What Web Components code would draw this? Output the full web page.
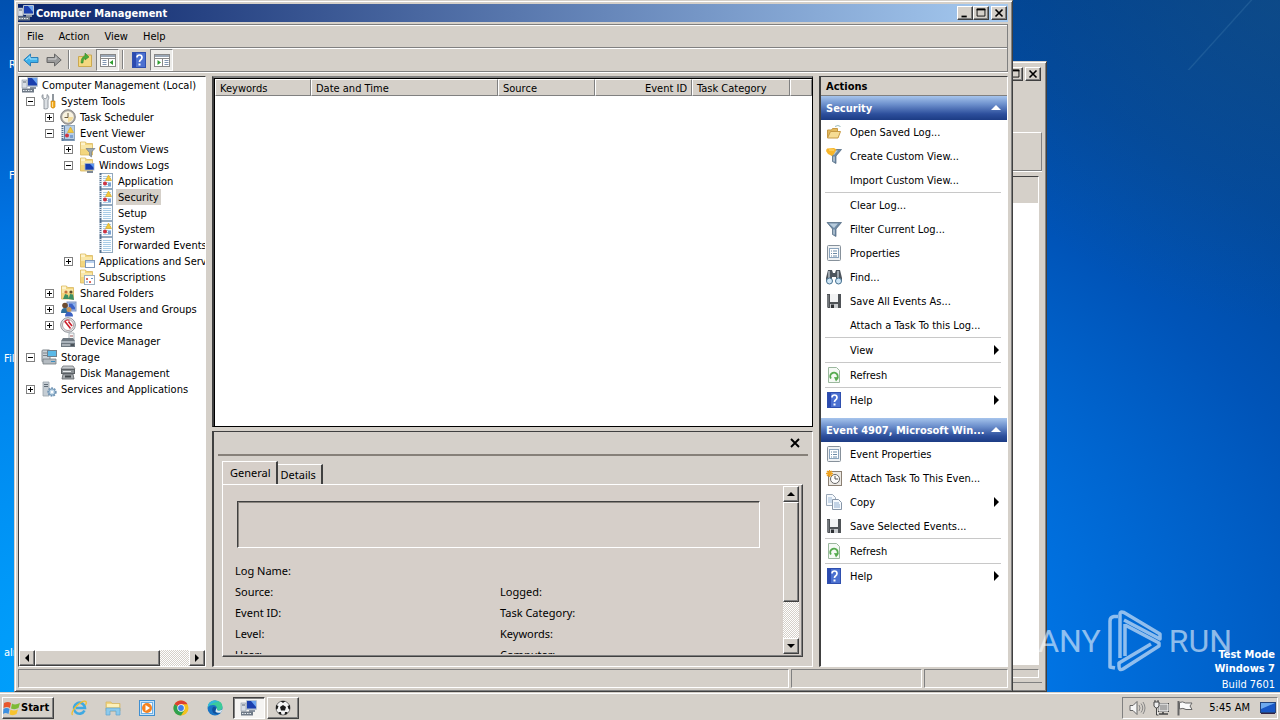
<!DOCTYPE html>
<html lang="en">
<head>
<meta charset="utf-8">
<title>Computer Management</title>
<style>
html,body{margin:0;height:100%;overflow:hidden}
body{
  --face:#d5d0c9;--shade:#808080;--dark:#404040;--lite:#ffffff;
  font:11px/16px "DejaVu Sans Condensed","Noto Sans",sans-serif;color:#000;
}
</style>
</head>
<body>
<desktop-screen></desktop-screen>
<script>
const BASE = `
*{box-sizing:border-box}
:host{display:block;box-sizing:border-box}
button{font:inherit;color:inherit;background:none;border:0;margin:0;padding:0;text-align:left}
.raised{background:var(--face);border:1px solid;border-color:var(--lite) var(--dark) var(--dark) var(--lite);box-shadow:inset -1px -1px var(--shade)}
.center{display:flex;align-items:center;justify-content:center}
`;
function element(name, css, html) {
  customElements.define(name, class extends HTMLElement {
    connectedCallback() {
      if (this.shadowRoot) return;
      const root = this.attachShadow({mode: 'open'});
      root.innerHTML = `<style>${BASE}${css}</style>` + (typeof html === 'function' ? html(this) : html);
    }
  });
}

/* ---------- icons ---------- */
const FOLDER = '<path d="M1.500 1h5l1 1.500h6V14h-12z" fill="#f3d67e" stroke="#d9b860" stroke-width=".8"/><path d="M2 4h11v4H2z" fill="#f9e7a8"/><path d="M2 1.500h4V4H2z" fill="#fdf3cc"/>';
const LOG = '<rect x="2.500" y=".5" width="12" height="15" fill="#fbfdff" stroke="#93a9be"/><path d="M1.500 0h2v16h-2z" fill="#54708f"/><path d="M1 2.500h3M1 4.500h3M1 6.500h3M1 8.500h3M1 10.500h3M1 12.500h3" stroke="#dde6ef"/>';
const LINES = '<path d="M5 3.500h8M5 5.500h8M5 7.500h8M5 9.500h8M5 11.500h8M5 13.500h8" stroke="#a9cce6"/>';
const MARKS = '<path d="M10.500 2l3 5.500h-6z" fill="#f3ca3a" stroke="#d9a520" stroke-width=".6"/><circle cx="7" cy="10.500" r="2" fill="#cf3442"/><rect x="10" y="10" width="3" height="3" fill="#7da0d0"/>';
const FUNNEL = '<path d="M1 1.500h14.500L10 8v7.500l-3.500-2V8z" fill="#6f8ba6" stroke="#4b637b" stroke-width=".7"/><path d="M3 2.500h9L8 7z" fill="#b9cddd"/><path d="M8 8.500v5" stroke="#dbe6ee"/>';
const PAGE = '<rect x="1.500" y=".5" width="13" height="15" rx="1" fill="#eef1f3" stroke="#87919b"/>';
const ICONS = {
  computer: '<rect x="5" y="0" width="11" height="10" rx="1" fill="#b9c4d2"/><rect x="6" y="1" width="9" height="7.500" fill="#1b3fae"/><path d="M10 1h5v6z" fill="#6da4f0"/><path d="M8 10h6v2H8z" fill="#8c96a3"/><rect x="0" y="3" width="5" height="8" fill="#d9dee5" stroke="#8993a1" stroke-width=".6"/><path d="M1 5h3" stroke="#5b6573"/><path d="M0 11.500h12v4H0z" fill="#6e7986"/><path d="M1 13.500h10" stroke="#e6ebf0" stroke-dasharray="1.500 1"/>',
  tools: '<path d="M2 1.500v3l2 1.500 2-1.500v-3c2 1 2.500 3.500 1 5.500v7.500q0 1.500-2.500 1.500T3 14.500V7C.5 5 .5 2.500 2 1.500z" fill="#dce0e4" stroke="#7d858e" stroke-width=".8"/><path d="M11 1h2v7h-2z" fill="#90979e"/><path d="M10 8h4v6q-2 2.500-4 0z" fill="#f5ad1f" stroke="#c47c0a" stroke-width=".6"/><path d="M11 9h1v5h-1z" fill="#ffe09a"/>',
  clock: '<circle cx="8" cy="8" r="7.300" fill="#a9a7a4" stroke="#8a8886"/><circle cx="8" cy="8" r="5.800" fill="#f8f2df"/><path d="M8 8H13A5 5 0 0 1 8 13z" fill="#f3dc9b"/><path d="M8 4v4.500H4.500" fill="none" stroke="#6b5c43"/>',
  viewer: LOG + '<rect x="4" y="1" width="10" height="14" fill="#b7cee6"/><path d="M4 1h1v14H4zM2 14h12v1.500H2z" fill="#6383a8"/>' + MARKS,
  logmark: LOG + LINES + MARKS,
  log: LOG + LINES,
  folderfilter: FOLDER + '<path d="M7 7.500h9l-3.500 3.500V16l-2-1.500v-3z" fill="#9aa6b1" stroke="#65707b" stroke-width=".6"/>',
  folderpc: FOLDER + '<rect x="6" y="6.500" width="9" height="6.500" fill="#173db0" stroke="#a7b5cb" stroke-width=".8"/><path d="M11 7h4v4z" fill="#5f98ee"/><path d="M8 14h6v2H8z" fill="#7c8896"/>',
  folderwin: FOLDER + '<rect x="6.500" y="7.500" width="9" height="7" fill="#fff" stroke="#7f97b8"/><path d="M7 8h8v2H7z" fill="#b9d1ee"/>',
  foldersub: FOLDER + '<rect x="5.500" y="6.500" width="10" height="9" fill="#fff" stroke="#9fb0c0"/><path d="M7 9h2v2H7zM10 12h2v2h-2z" fill="#dd6a60"/><path d="M7 13h2M12 9.500h2" stroke="#6c94c5"/>',
  foldershare: FOLDER + '<circle cx="6" cy="7" r="1.600" fill="#c4703b"/><circle cx="11" cy="7" r="1.600" fill="#5b4a28"/><path d="M3 14l2-5 3 1 1 4zM8.500 14L10 9l3 .5L14 15z" fill="#3b8f65"/>',
  users: '<rect x="7" y="1" width="9" height="9" fill="#a9bfe6" stroke="#7c94c4"/><rect x="9" y="2.500" width="6" height="6" fill="#3c62c6"/><path d="M12 2.500h3v4z" fill="#89b0f0"/><circle cx="5" cy="4.500" r="2.800" fill="#6d4b2f"/><path d="M1 12q0-5 4-5t4 5z" fill="#2f6f9c"/><circle cx="9" cy="8.500" r="2.500" fill="#c9975a"/><path d="M5 15.500q0-4.500 4-4.500t4 4.500z" fill="#3b62c2"/>',
  perf: '<circle cx="8" cy="8" r="7.300" fill="#e8e9eb" stroke="#8d9197"/><circle cx="8" cy="8" r="5.500" fill="#fff" stroke="#9b8c8e" stroke-width=".8"/><path d="M4.500 5q2-3 5-1.500" fill="none" stroke="#d34" stroke-width="1.200"/><path d="M5 4.500l5.500 7M8.500 4.500L12 9" stroke="#c9202c" stroke-width="1.600"/>',
  device: '<path d="M9 0h5v8H9z" fill="#f7f8f9" stroke="#9aa2aa" stroke-width=".8"/><path d="M10 2h3v2h-3z" fill="#caa"/><path d="M1 8l2-3h10l2 3v6H1z" fill="#6e7881"/><path d="M1 8h14v2H1z" fill="#aab3bb"/><path d="M2 12h8" stroke="#e2e7eb"/><path d="M11 11h3v2h-3z" fill="#4a5259"/>',
  storage: '<rect x="1" y="1" width="8" height="12" rx="1" fill="#cbd1d6" stroke="#80888f"/><path d="M2 4h6M2 6.500h6" stroke="#7b838b"/><rect x="6.500" y="1.500" width="9" height="6" fill="#5ab9e8" stroke="#71808c"/><path d="M2 10h13v5H2z" fill="#b4bbc1" stroke="#737b82" stroke-width=".8"/><path d="M10 12.500h4" stroke="#3b8ec0"/>',
  disk: '<path d="M3 1h10l2 3H1z" fill="#c7cbce" stroke="#6d7276" stroke-width=".8"/><rect x="1.500" y="4.500" width="13" height="4" fill="#8b9195" stroke="#5c6165"/><path d="M3 6.500h8" stroke="#e8ebed"/><path d="M3 9h10l1 5H2z" fill="#a4a9ad" stroke="#5c6165" stroke-width=".8"/><path d="M5 11.500h6" stroke="#3f4448" stroke-width="2"/>',
  services: '<path d="M2 1h6v14H2z" fill="#c5cdd4" stroke="#9aa3ab" stroke-width=".8"/><path d="M3 3.500h4M3 5.500h4" stroke="#5f6a74"/><circle cx="11" cy="11" r="3.700" fill="#a9c6de" stroke="#6f93b3" stroke-width="2" stroke-dasharray="1.700 1"/><circle cx="11" cy="11" r="3" fill="#c3d9ea" stroke="#6f93b3" stroke-width=".7"/><circle cx="11" cy="11" r="1.200" fill="#fff"/>',
  open: '<path d="M1.500 14V6h4l1-1.500h5V8" fill="#e2b95c" stroke="#c79a44"/><path d="M9 2.500q3-2 5.500 0" fill="none" stroke="#9bb"/><path d="M1.500 14l3-6.500h10l-2.500 6.500z" fill="#f6dc94" stroke="#c79a44"/>',
  funnel: FUNNEL,
  funnelnew: FUNNEL + '<path d="M0 3L1 .5 8 0l2.500 1.500L8 6 6 8 2 6z" fill="#f8b62a"/><path d="M3 2h5" stroke="#ffdf80"/>',
  props: PAGE + '<rect x="3.500" y="3.500" width="9" height="9" fill="#fff" stroke="#8ba4bd"/><path d="M5 6h1M7 6h4M5 8.500h1M7 8.500h4M5 11h1M7 11h4" stroke="#6d8ba6"/>',
  find: '<path d="M2 1h4l1 3h2l1-3h4l2 8v3h-6V8H6v4H0V9z" fill="#4e565e"/><path d="M3 2v7M12 2v7" stroke="#b7c0c8" stroke-width="1.500"/><circle cx="3.500" cy="12" r="3" fill="#cfe6f6" stroke="#46708f"/><circle cx="12.500" cy="12" r="3" fill="#cfe6f6" stroke="#46708f"/>',
  save: '<path d="M1 1h14v14H2l-1-1z" fill="#4f5357"/><path d="M4 1h8v8H4z" fill="#f2f3f4"/><path d="M4 11h8v4H4z" fill="#c9cccf"/><path d="M5 11.500h3V15H5z" fill="#2e3134"/><path d="M2 2v12" stroke="#9a9ea2"/>',
  refresh: '<path d="M2.500.5h8l3 3v12h-11z" fill="#f5faf5" stroke="#9cb89f"/><path d="M5 11.500A3.700 3.700 0 1 1 10.500 12" fill="none" stroke="#56ab50" stroke-width="1.900"/><path d="M8 10l5 .5-3 4z" fill="#56ab50"/>',
  help: '<rect x="1.500" y=".5" width="13" height="15" fill="#4b70d0" stroke="#2f4fae"/><path d="M2 1h3v14H2z" fill="#2b4ab0"/><path d="M6 5.500Q6 3 8.500 3T11 5.500Q11 7 9.500 8 8.500 8.700 8.500 10" fill="none" stroke="#fff" stroke-width="1.700"/><rect x="7.500" y="11.500" width="2" height="2" fill="#fff"/>',
  task: '<rect x="2.500" y="1.500" width="13" height="14" fill="#ece9e4" stroke="#8b8073"/><circle cx="9" cy="9" r="4.500" fill="#fdfdfd" stroke="#666"/><path d="M9 6v3h3" fill="none" stroke="#555"/><path d="M3.500 0v7M0 3.500h7M1 1l5 5M6 1L1 6" stroke="#f0a21c" stroke-width="1.300"/>',
  copy: '<path d="M.5.5h6l3 3v8h-9z" fill="#f5f9fd" stroke="#9aa8b8"/><path d="M2 4h4M2 6h4M2 8h4" stroke="#9fbbd8"/><path d="M6.500 5.500h6l3 3v7h-9z" fill="#f5f9fd" stroke="#8796a8"/><path d="M8 9h5M8 11h6M8 13h6" stroke="#8fadcf"/>',
  back: '<path d="M.8 8L7.500 2v3.500H15v5H7.500V14z" fill="#3fb1ea" stroke="#2b7fb8"/><path d="M3 8l4-3.500V7h7" fill="none" stroke="#a9e2fb"/>',
  forward: '<path d="M15.200 8L8.500 2v3.500H1v5h7.500V14z" fill="#9a9a9a" stroke="#666"/><path d="M2 7h8V4.500" fill="none" stroke="#d0d0d0"/>',
  up: '<path d="M1.500 4.500h5l1-1.500h7v11.500h-13z" fill="#f4d880" stroke="#cba850"/><path d="M4 11q0-6 4-7V1l4 4-4 3V6q-2 1-2 5z" fill="#47ab3a" stroke="#2a7c25" stroke-width=".5"/>',
  paneleft: '<rect x=".5" y="2.500" width="15" height="12" fill="#fff" stroke="#888"/><path d="M1 3h14v2H1z" fill="#9aa7b6"/><path d="M1 6.500h14M8.500 7v7" stroke="#888"/><path d="M2.500 8.500h4M2.500 10.500h4M2.500 12.500h4" stroke="#8095b0"/><path d="M13 8v5L9.500 10.500z" fill="#2f9d2f"/>',
  paneright: '<rect x=".5" y="2.500" width="15" height="12" fill="#fff" stroke="#888"/><path d="M1 3h14v2H1z" fill="#9aa7b6"/><path d="M1 6.500h14M8.500 7v7" stroke="#888"/><path d="M10.500 8.500h4M10.500 10.500h4M10.500 12.500h4" stroke="#8095b0"/><path d="M3.500 8v5L7 10.500z" fill="#2f9d2f"/>',
  left: '<path d="M10 4v8L6 8z"/>', right: '<path d="M6 4v8l4-4z"/>', submenu: '<path d="M5 3v10l5-5z"/>',
  upa: '<path d="M4 10h8L8 6z"/>', downa: '<path d="M4 6h8l-4 4z"/>', collapse: '<path d="M3 10h10L8 5z" fill="#fff"/>',
  min: '<path d="M4 11h6v2H4z"/>', max: '<path d="M3.500 3.500h9v8h-9z" fill="none" stroke="#000"/><path d="M3 3h10v2H3z"/>',
  close: '<path d="M4 4l8 8M12 4l-8 8" stroke="#000" stroke-width="1.900"/>',
  flag: '<path d="M0 3q4-2 7 0L6 8Q3 6-.5 8z" fill="#e8572c"/><path d="M8 3.500q3 2 8-.500l-1.500 5Q11 10 7 8.500z" fill="#7dbb35"/><path d="M-.5 9q3-2 6 0l-1 5q-3-2-5.500 0z" fill="#3d8fe0"/><path d="M6.500 9.500q3 2 7.500 0l-1.500 4.500q-3 2-7 .5z" fill="#f7c32f"/>',
  ie: '<path d="M13.500 10.500A5.500 5.500 0 1 1 14 8H5" fill="none" stroke="#3fa9e2" stroke-width="2.600"/><path d="M1.500 15Q-.5 13 5 6.500 12 0 15 1.500 16 3 14.500 5" fill="none" stroke="#f2be2c" stroke-width="1.300"/>',
  explorer: '<path d="M1 2h5l1 1.500h8V11H1z" fill="#f0d480" stroke="#d5b55c" stroke-width=".7"/><path d="M2 4h12v3H2z" fill="#fdf0b8"/><path d="M1 8h14v7h-4v-4H5v4H1z" fill="#8ccaec" stroke="#5fa4d0" stroke-width=".7"/>',
  wmp: '<rect x=".5" y=".5" width="15" height="15" fill="#c9e3f8" stroke="#3f8fd1"/><rect x="2.500" y="2.500" width="11" height="11" fill="#f9fcff" stroke="#6fb0e4"/><circle cx="8" cy="8" r="5" fill="#f58220"/><path d="M6.500 5v6l4.500-3z" fill="#fff"/>',
  chrome: '<circle cx="8" cy="8" r="7.500" fill="#f4c21f"/><path d="M8 8L1.500 4.200A7.500 7.500 0 0 1 14.500 4.200H8z" fill="#dd4031"/><path d="M8 8L1.500 4.200A7.500 7.500 0 0 0 8 15.500l3.500-5.500z" fill="#2fa14f"/><circle cx="8" cy="8" r="3.700" fill="#fff"/><circle cx="8" cy="8" r="2.900" fill="#3f7de8"/>',
  edge: '<circle cx="8" cy="8" r="7.500" fill="#1a73c4"/><path d="M.6 7Q1.500.5 8 .5q7.500 0 7.500 6.500 0 3-3.500 3.500-2 0-2-1.500 0-4-4-4Q2 5 .6 7z" fill="#3ccb9a"/><path d="M1 5Q3 .5 8 .5l4 1.500Q5 2 1 7z" fill="#32b7dc"/><path d="M9.500 9q-1-3-3.500-2-2 3 .5 6 3 2 7 0-2 1.500-5-1-1.500-2 1-3z" fill="#124f9a"/><path d="M9.500 8q1 1 .5 2 2 1.500 5.500-.5l-1.500 3q-4 1-5.500-1z" fill="#dfe9ee"/>',
  ball: '<circle cx="8" cy="8" r="7" fill="#f4f4f4" stroke="#555" stroke-width=".8"/><path d="M8 5l3 2-1 3.500H6L5 7zM5.500 1h5L8 3zM1 5l2.500 1-1 3-1.500.5zM15 5l-2.500 1 1 3 1.500.5zM3.500 12l2.500 0 .5 3L4 14zM12.500 12L10 12l-.5 3L12 14z" fill="#1c1c1c"/>',
  sound: '<path d="M1 5.500h3l4-4v13l-4-4H1z" fill="#f6f6f6" stroke="#666"/><path d="M10 5q2 3 0 6M12 3.500q3.500 4.500 0 9M14 2q4 6 0 12" fill="none" stroke="#888"/>',
  net: '<rect x="5.500" y="3.500" width="10" height="8" fill="#aaa" stroke="#444"/><path d="M6 4h9v7H6z" fill="none" stroke="#fff"/><path d="M6 14h9M10 12v2" stroke="#444" stroke-width="1.600"/><path d="M1 2h5v4q-1 2-2.500 2T1 6zM2 0v2M5 0v2M3.500 8v7h2" fill="#eee" stroke="#444"/>',
  notice: '<path d="M1.500 1v14.500" stroke="#666" stroke-width="2"/><path d="M2.500 2.500q3-1.500 6 .5h6.500l-2 3 2 3.500H9q-3-2-6.500-.5z" fill="#fafafa" stroke="#666"/>',
  desk: '<rect x=".5" y="2.500" width="15" height="10" fill="#1857c4" stroke="#24457c"/><path d="M1 3h14L1 9z" fill="#6da9ee"/><path d="M1 13.500h14" stroke="#324"/>'
};
element('ui-icon', `:host{display:block;width:16px;height:16px;flex:none}svg{display:block;width:100%;height:100%;overflow:visible}`,
  el => `<svg viewBox="0 0 16 16" aria-hidden="true">${ICONS[el.getAttribute('name')] || ''}</svg>`);

/* ---------- scroll bar ---------- */
element('scroll-bar', `
:host{display:flex;flex:none;background:repeating-conic-gradient(#fff 0 25%,var(--face) 0 50%) 0 0/2px 2px}
:host([vertical]){flex-direction:column;width:16px}
:host(:not([vertical])){height:16px}
button{width:16px;height:16px;flex:none}
.rest{flex:1}
.thumb{flex:none}
`, el => { const v = el.hasAttribute('vertical'), s = el.getAttribute('size'); return `
<button class="raised center" aria-label="Scroll back"><ui-icon name="${v ? 'upa' : 'left'}"></ui-icon></button>
<div class="raised thumb" style="${v ? 'height' : 'width'}:${s}"></div><div class="rest"></div>
<button class="raised center" aria-label="Scroll forward"><ui-icon name="${v ? 'downa' : 'right'}"></ui-icon></button>`; });

/* ---------- window frame ---------- */
element('window-controls', `
:host{display:flex;flex:none}
button{width:16px;height:14px}
button:last-child{margin-left:2px}
ui-icon{width:14px;height:14px}
`, `<button class="raised center" aria-label="Minimize"><ui-icon name="min"></ui-icon></button><button class="raised center" aria-label="Maximize"><ui-icon name="max"></ui-icon></button><button class="raised center" aria-label="Close"><ui-icon name="close"></ui-icon></button>`);

element('app-window', `
:host{display:flex;flex-direction:column;background:var(--face);border:1px solid;border-color:var(--face) var(--dark) var(--dark) var(--face);box-shadow:inset 1px 1px #fff,inset -1px -1px var(--shade);padding:3px 4px 3px 3px}
header{display:flex;align-items:center;height:18px;flex:none;gap:2px;padding:0 1px 0 0;color:#fff;font-weight:bold;background:linear-gradient(90deg,#0a246a,#a6caf0);margin-bottom:2px}
:host([inactive]) header{background:var(--face)}
h1{font-size:11px;line-height:16px;margin:0;padding-top:2px;flex:1;font-weight:bold}
`, el => `<header>${el.hasAttribute('icon') ? `<ui-icon name="${el.getAttribute('icon')}"></ui-icon>` : ''}<h1>${el.getAttribute('heading') || ''}</h1><window-controls></window-controls></header><slot></slot>`);

element('menu-bar', `
:host{display:flex;align-items:center;height:24px;flex:none;border:1px solid var(--shade);box-shadow:inset 1px 1px #fff,0 1px #fff}
button{padding:2px 7px 0 8px}
button:first-child{padding-left:7px}
`, `<button>File</button><button>Action</button><button>View</button><button>Help</button>`);

element('tool-bar', `
:host{display:flex;align-items:center;height:24px;flex:none;border:1px solid var(--shade);border-top:0;box-shadow:inset 1px 1px #fff,0 1px #fff}
button{width:23px;height:22px}
button[aria-pressed]{background:#ecebe8;border:1px solid;border-color:var(--shade) #fff #fff var(--shade)}
i{width:2px;height:19px;margin:0 3px;border-left:1px solid var(--shade);border-right:1px solid #fff}
`, `<button class="center" aria-label="Back"><ui-icon name="back"></ui-icon></button><button class="center" aria-label="Forward"><ui-icon name="forward"></ui-icon></button><i></i>
<button class="center" aria-label="Up one level"><ui-icon name="up"></ui-icon></button><button class="center" aria-pressed="true" aria-label="Console tree"><ui-icon name="paneleft"></ui-icon></button><i></i>
<button class="center" aria-label="Help"><ui-icon name="help"></ui-icon></button><button class="center" aria-pressed="true" aria-label="Action pane"><ui-icon name="paneright"></ui-icon></button>`);

/* ---------- console tree ---------- */
element('tree-item', `
:host{display:block}
.row{display:flex;align-items:center;height:16px;padding-left:7px;white-space:nowrap}
.box{width:9px;height:9px;flex:none;margin-right:6px;padding:0;border:1px solid transparent}
.box.on{border-color:#808080;background:linear-gradient(#000,#000) 1px 3px/5px 1px no-repeat}
.box.plus{background:linear-gradient(#000,#000) 1px 3px/5px 1px no-repeat,linear-gradient(#000,#000) 3px 1px/1px 5px no-repeat}
.name{padding:2px 2px 0;line-height:14px;margin-left:2px}
:host([selected]) .name{background:var(--face)}
.kids{padding-left:19px}
:host([root]) .row{padding-left:3px}
:host([root]) .box{display:none}
:host([root]) .kids{padding-left:0}
`, el => { const s = el.getAttribute('state'); return `<div class="row" role="treeitem">
${s ? `<button class="box on ${s === 'closed' ? 'plus' : ''}" aria-label="${s === 'closed' ? 'Expand' : 'Collapse'}"></button>` : '<span class="box"></span>'}
<ui-icon name="${el.getAttribute('icon')}"></ui-icon><span class="name">${el.getAttribute('label')}</span></div><div class="kids"><slot></slot></div>`; });

element('console-tree', `
:host{display:flex;flex-direction:column;background:#fff;border:1px solid;border-color:var(--dark) #fff #fff var(--dark);overflow:hidden}
nav{flex:1;min-height:0;overflow:hidden}
`, `<nav role="tree"><tree-item root icon="computer" label="Computer Management (Local)">
<tree-item icon="tools" label="System Tools" state="open">
 <tree-item icon="clock" label="Task Scheduler" state="closed"></tree-item>
 <tree-item icon="viewer" label="Event Viewer" state="open">
  <tree-item icon="folderfilter" label="Custom Views" state="closed"></tree-item>
  <tree-item icon="folderpc" label="Windows Logs" state="open">
   <tree-item icon="logmark" label="Application"></tree-item>
   <tree-item icon="logmark" label="Security" selected></tree-item>
   <tree-item icon="log" label="Setup"></tree-item>
   <tree-item icon="logmark" label="System"></tree-item>
   <tree-item icon="log" label="Forwarded Events"></tree-item>
  </tree-item>
  <tree-item icon="folderwin" label="Applications and Services Logs" state="closed"></tree-item>
  <tree-item icon="foldersub" label="Subscriptions"></tree-item>
 </tree-item>
 <tree-item icon="foldershare" label="Shared Folders" state="closed"></tree-item>
 <tree-item icon="users" label="Local Users and Groups" state="closed"></tree-item>
 <tree-item icon="perf" label="Performance" state="closed"></tree-item>
 <tree-item icon="device" label="Device Manager"></tree-item>
</tree-item>
<tree-item icon="storage" label="Storage" state="open">
 <tree-item icon="disk" label="Disk Management"></tree-item>
</tree-item>
<tree-item icon="services" label="Services and Applications" state="closed"></tree-item>
</tree-item></nav><scroll-bar size="67%"></scroll-bar>`);

/* ---------- event list ---------- */
element('event-table', `
:host{display:block;background:#fff;border:2px solid;border-color:var(--shade) #000 #000 var(--dark);border-width:2px 1px 1px 2px;box-shadow:inset 1px 1px #000;padding:1px 0 0 1px;overflow:hidden}
table{width:100%;table-layout:fixed;border-collapse:separate;border-spacing:0}
th{height:17px;padding:2px 4px 0;font-weight:normal;text-align:left;background:var(--face);border:1px solid;border-color:#fff var(--shade) var(--shade) #fff;line-height:13px;white-space:nowrap}
th.num{text-align:right}
`, `<table><colgroup><col style="width:96px"><col style="width:187px"><col style="width:97px"><col style="width:97px"><col style="width:98px"><col></colgroup>
<thead><tr><th>Keywords</th><th>Date and Time</th><th>Source</th><th class="num">Event ID</th><th>Task Category</th><th></th></tr></thead></table>`);

/* ---------- event details ---------- */
element('event-details', `
:host{display:flex;flex-direction:column;border:2px solid;border-color:var(--dark) #fff #fff var(--dark);border-width:1px 1px 1px 2px;padding:0 4px;background:#d5d0ca}
.bar{display:flex;justify-content:flex-end;align-items:center;height:24px;flex:none;border-bottom:2px solid #868079;padding-right:5px}
.tabs{display:flex;align-items:flex-end;height:28px;flex:none;padding-left:4px;font:11px/16px "Noto Sans","Open Sans",sans-serif}
.tabs button{height:20px;padding:0 5px 0 3px;border:1px solid #fff;border-right:2px solid var(--dark);border-bottom:0;border-left:0}
.tabs button[aria-selected=true]{height:24px;padding:0 5px 2px 7px;border-left:1px solid #fff;margin-bottom:-1px;background:#d6cfc9}
.panel{flex:1;min-height:0;display:flex;margin:0 5px 9px 4px;border:1px solid;border-color:#fff var(--dark) var(--dark) #fff;box-shadow:inset -1px -1px var(--shade);padding:1px 3px 2px 0;background:#d6cfc9}
.body{flex:1;min-width:0;overflow:hidden;padding:15px 23px 0 14px;font:11px/21px "Noto Sans","Open Sans",sans-serif}
.message{height:47px;border:1px solid;border-color:var(--dark) #fff #fff var(--dark);box-shadow:inset 1px 1px #8a857f}
dl{display:grid;grid-template-columns:265px 1fr;margin:12px -2px 0}
dt{height:21px}
`, `<div class="bar"><button aria-label="Close preview"><ui-icon name="close"></ui-icon></button></div>
<div class="tabs" role="tablist"><button role="tab" aria-selected="true">General</button><button role="tab">Details</button></div>
<div class="panel"><div class="body"><div class="message"></div>
<dl><dt>Log Name:</dt><dt></dt><dt>Source:</dt><dt>Logged:</dt><dt>Event ID:</dt><dt>Task Category:</dt><dt>Level:</dt><dt>Keywords:</dt><dt>User:</dt><dt>Computer:</dt></dl></div>
<scroll-bar vertical size="100px"></scroll-bar></div>`);

/* ---------- actions ---------- */
element('action-item', `
:host{display:block;margin:0 6px 0 4px}
:host([ruled]){border-bottom:1px solid #c8c8c8}
button{display:flex;align-items:center;width:100%;height:24px;gap:8px;padding-left:1px;white-space:nowrap}
span{flex:1;padding-top:2px}
ui-icon.more{margin-right:-4px}
`, el => `<button><ui-icon name="${el.getAttribute('icon') || ''}"></ui-icon><span><slot></slot></span>${el.hasAttribute('more') ? '<ui-icon class="more" name="submenu"></ui-icon>' : ''}</button>`);
element('action-group', `
:host{display:block;margin-bottom:6px}
h3{display:flex;align-items:center;justify-content:space-between;height:24px;margin:0;padding:0 3px 0 5px;font-size:11px;line-height:16px;color:#fff;white-space:nowrap;background:linear-gradient(#a6c4ec,#6c8fcc 35%,#2d4f9c 75%,#1c3c84)}
span{padding-top:2px}
`, el => `<h3><span>${el.getAttribute('heading')}</span><button aria-label="Collapse"><ui-icon name="collapse"></ui-icon></button></h3><slot></slot>`);
element('actions-pane', `
:host{display:block;background:#fff;border:1px solid;border-color:var(--dark) #fff #fff var(--dark);border-left-width:2px;overflow:hidden}
h2{margin:0;height:19px;padding:1px 5px 0;font-size:11px;line-height:18px;background:var(--face);border-bottom:1px solid var(--shade)}
`, `<h2>Actions</h2>
<action-group heading="Security">
<action-item icon="open">Open Saved Log...</action-item>
<action-item icon="funnelnew">Create Custom View...</action-item>
<action-item ruled>Import Custom View...</action-item>
<action-item>Clear Log...</action-item>
<action-item icon="funnel">Filter Current Log...</action-item>
<action-item icon="props">Properties</action-item>
<action-item icon="find">Find...</action-item>
<action-item icon="save">Save All Events As...</action-item>
<action-item ruled>Attach a Task To this Log...</action-item>
<action-item ruled more>View</action-item>
<action-item ruled icon="refresh">Refresh</action-item>
<action-item icon="help" more>Help</action-item>
</action-group>
<action-group heading="Event 4907, Microsoft Win...">
<action-item icon="props">Event Properties</action-item>
<action-item icon="task">Attach Task To This Even...</action-item>
<action-item icon="copy" more>Copy</action-item>
<action-item ruled icon="save">Save Selected Events...</action-item>
<action-item ruled icon="refresh">Refresh</action-item>
<action-item icon="help" more>Help</action-item>
</action-group>`);

element('status-bar', `
:host{display:flex;gap:2px;height:19px;flex:none;margin-top:2px}
div{border:1px solid;border-color:var(--shade) #fff #fff var(--shade)}
div:nth-of-type(1){flex:1}div:nth-of-type(2){width:131px}div:nth-of-type(3){width:84px}
`, `<div></div><div></div><div></div>`);

element('management-console', `
:host{display:flex;flex-direction:column;flex:1;min-height:0}
main{display:grid;grid-template-columns:188px minmax(0,1fr) 189px;gap:6px;flex:1;min-height:0;margin-top:4px}
.mid{display:flex;flex-direction:column;gap:4px;min-height:0}
event-table{flex:1;min-height:0}
event-details{height:236px;flex:none}
`, `<menu-bar></menu-bar><tool-bar></tool-bar>
<main><console-tree></console-tree><div class="mid"><event-table></event-table><event-details></event-details></div><actions-pane></actions-pane></main>
<status-bar></status-bar>`);

element('background-console', `
:host{display:flex;flex-direction:column;flex:1;min-height:0}
.menu{height:47px;flex:none}
.tools{height:39px;flex:none;border:1px solid;border-color:#fff var(--shade) var(--shade) #fff;box-shadow:0 1px #fff}
.view{flex:1;margin:5px 3px 4px 0;background:linear-gradient(var(--face) 26px,#fff 26px);border:1px solid;border-color:var(--dark) #fff #fff var(--dark)}
.foot{height:9px;flex:none;border:1px solid;border-color:var(--shade) #fff #fff;margin:0 3px 4px 0}
.base{height:6px;flex:none;border-top:1px solid var(--shade)}
`, `<div class="menu"></div><div class="tools"></div><div class="view"></div><div class="foot"></div><div class="base"></div>`);

/* ---------- task bar ---------- */
element('task-bar', `
:host{display:flex;align-items:center;height:28px;flex:none;background:var(--face);box-shadow:inset 0 1px #fff;padding:3px 2px 1px 2px;border-top:1px solid var(--face)}
.start{display:flex;align-items:center;gap:1px;height:22px;width:52px;padding-left:1px;font-weight:bold}
.quick{display:flex;gap:18px;margin:0 10px 0 17px}
.task{width:32px;height:22px;margin-right:2px}
.task.on{background:#f5f4f2;border-color:var(--dark) #fff #fff var(--dark);box-shadow:inset 1px 1px var(--shade)}
.tray{display:flex;align-items:center;gap:8px;height:22px;margin-left:auto;padding:0 1px 0 6px;border:1px solid;border-color:var(--shade) #fff #fff var(--shade)}
time{padding:0 2px 0 8px;white-space:nowrap}
`, `<button class="raised start"><ui-icon name="flag"></ui-icon>Start</button>
<div class="quick"><ui-icon name="ie"></ui-icon><ui-icon name="explorer"></ui-icon><ui-icon name="wmp"></ui-icon><ui-icon name="chrome"></ui-icon><ui-icon name="edge"></ui-icon></div>
<button class="raised task on center" aria-label="Computer Management"><ui-icon name="computer"></ui-icon></button>
<button class="raised task center" aria-label="Launcher"><ui-icon name="ball"></ui-icon></button>
<div class="tray"><ui-icon name="sound"></ui-icon><ui-icon name="net"></ui-icon><ui-icon name="notice"></ui-icon><time>5:45 AM</time><ui-icon name="desk"></ui-icon></div>`);

element('any-run-mark', `
:host{display:flex;align-items:center;gap:6px;color:#ffffff90;font:32px/32px "Roboto","Liberation Sans",sans-serif}
svg{width:56px;height:62px;flex:none}
`, `<span>ANY</span><svg viewBox="0 0 56 62" fill="none" stroke="#ffffff90" stroke-width="3.500" stroke-linejoin="round" aria-hidden="true"><path d="M11 6.500H7Q3 7 3 11v46l5 1"/><path d="M13 48V4Q13 1 17 2.500L53 24v5L17 10"/><path d="M18 14v32M18 15l34 18v3L16 59q-4 2-4-3v-3L44 34"/></svg><span>RUN</span>`);

/* ---------- desktop ---------- */
element('desktop-screen', `
:host{display:flex;flex-direction:column;height:100vh}
.area{flex:1;position:relative;overflow:hidden;background:
 linear-gradient(132deg,transparent 49%,#3f7cae60 50%,transparent 51%) calc(100% - 10px) 0/100px 70px no-repeat,
 radial-gradient(ellipse 340px 320px at 100% 0,#1a548880,transparent),
 radial-gradient(ellipse 1400px 800px at 200px 700px,#00a8ff 0,#009cfa 16%,#0074e4 60%,#0054b8 84%,#00489e 98%,#003e86 118%)}
.name{position:absolute;left:0;width:40px;color:#fff;padding-left:4px}
.name.in{padding-left:9px}
app-window{position:absolute}
.back{inset:61px 233px 0 400px}
.main{inset:0 267px 0 14px}
any-run-mark{position:absolute;right:48px;bottom:20px}
.build{position:absolute;right:5px;bottom:0;margin:0;text-align:right;color:#fff;line-height:14px}
.build span{display:block;margin-top:2px}
`, `<div class="area">
<div class="name in" style="top:57px">Recycle</div><div class="name in" style="top:168px">Firefox</div><div class="name" style="top:351px">FileZilla</div><div class="name" style="top:645px">already</div>
<app-window inactive class="back"><background-console></background-console></app-window>
<app-window class="main" icon="computer" heading="Computer Management"><management-console></management-console></app-window>
<any-run-mark></any-run-mark>
<p class="build"><b>Test Mode<br>Windows 7</b><span>Build 7601</span></p>
</div><task-bar></task-bar>`);
</script>
</body>
</html>
